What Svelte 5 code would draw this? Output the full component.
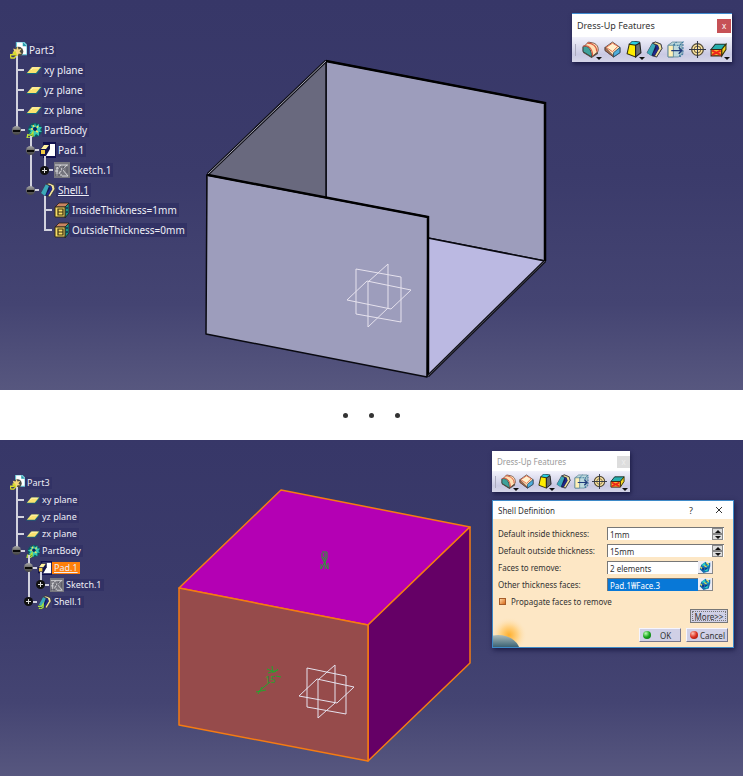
<script lang="ts">
	type TreeNode = {
		label: string;
		icon: string;
		toggle?: "plus" | "minus";
		state?: "active" | "selected";
		children?: TreeNode[];
	};

	const planes: TreeNode[] = [
		{ label: "xy plane", icon: "plane" },
		{ label: "yz plane", icon: "plane" },
		{ label: "zx plane", icon: "plane" }
	];

	const sketch: TreeNode = { label: "Sketch.1", icon: "sketch", toggle: "plus" };

	const resultTree: TreeNode[] = [
		...planes,
		{
			label: "PartBody",
			icon: "body",
			toggle: "minus",
			children: [
				{ label: "Pad.1", icon: "pad", toggle: "minus", children: [sketch] },
				{
					label: "Shell.1",
					icon: "shell",
					toggle: "minus",
					state: "active",
					children: [
						{ label: "InsideThickness=1mm", icon: "param" },
						{ label: "OutsideThickness=0mm", icon: "param" }
					]
				}
			]
		}
	];

	const editTree: TreeNode[] = [
		...planes,
		{
			label: "PartBody",
			icon: "body",
			toggle: "minus",
			children: [
				{ label: "Pad.1", icon: "pad", toggle: "minus", state: "selected", children: [sketch] },
				{ label: "Shell.1", icon: "shellEdit", toggle: "plus" }
			]
		}
	];

	const tools = [
		{ name: "Edge Fillet", icon: "fillet", more: true },
		{ name: "Chamfer", icon: "chamfer", more: false },
		{ name: "Draft Angle", icon: "draft", more: true },
		{ name: "Shell", icon: "shell", more: false },
		{ name: "Thickness", icon: "thickness", more: false },
		{ name: "Thread/Tap", icon: "thread", more: false },
		{ name: "Remove Face", icon: "remove", more: true }
	];

	let inside = $state("1mm");
	let outside = $state("15mm");
	let faces = $state("2 elements");
	let otherFaces = $state("Pad.1₩Face.3");
	let propagate = $state(true);

	function step(value: string, delta: number) {
		return Math.max(0, parseInt(value) + delta) + "mm";
	}
</script>

{#snippet icon(name: string)}
	<svg class="icon" viewBox="0 0 16 16" aria-hidden="true">
		{#if name === "part"}
			<path d="M6 0h7l3 3v9H6z" fill="#fff" stroke="#5fc6d8" stroke-width="1" />
			<path d="M12 0l4 4h-4z" fill="#279cab" />
			<circle cx="8" cy="9" r="4.5" fill="#4d4a44" />
			<path d="M3 6l3 1 1-3 1 3 3-1-2 3 2 2-3 0-1 3-2-3-3 0 2-2z" fill="#f5d77a" />
			<path d="M0 12h4l1-2 1 3-2 2H1zM3 9l2 3" fill="none" stroke="#d8dc2d" stroke-width="1.4" />
		{:else if name === "plane"}
			<path d="M0 12L6 5h10l-5 7z" fill="#176a7b" />
			<path d="M1 11L6 5h9l-5 6z" fill="#fbe36f" />
			<path d="M5 8l2-2h6" fill="none" stroke="#fff3ba" />
		{:else if name === "body"}
			<circle cx="9" cy="8" r="7" fill="#0b5960" />
			<path d="M9 1l1 3 3-2v3l3 0-2 3 2 2-3 0 0 4-3-2-2 3-1-4-4 1 2-3-3-2 4-1-1-3 3 1z" fill="#35c8b4" />
			<circle cx="9" cy="7" r="2" fill="#0b2260" />
			<path d="M7 3l1 2M12 4l-1 2M5 7h2M12 10l-2-1" stroke="#f4e15c" stroke-width="1.4" />
			<path d="M1 13h4l2-3v4l-3 2H1l1-4" fill="none" stroke="#b8e336" stroke-width="1.3" />
		{:else if name === "pad"}
			<path d="M3 0h13v16H3z" fill="#10104e" />
			<path d="M5 2h10v12H5z" fill="#fff" />
			<path d="M0 8l4-6h6v5l-4 7H0z" fill="#111148" />
			<path d="M1 7l3-4h5L6 7z" fill="#fff2a0" />
			<path d="M1 8h4v4H1z" fill="#efc943" />
		{:else if name === "sketch"}
			<path d="M0 0h16v16H0z" fill="#77777f" />
			<path d="M1 3h13M2 6h4M1 9h3M3 14V6l4-3M7 14c0-7 3-8 6-11M8 7l6 7H8M5 12l3-6" fill="none" stroke="#d7d7da" />
			<path d="M4 4l3 5M10 4l-3 8M13 5v6M1 13h5" fill="none" stroke="#4e4e5a" stroke-width=".8" />
		{:else if name === "param"}
			<path d="M1 5l4-4h10l-4 4z" fill="#c98562" stroke="#27201b" stroke-width=".8" />
			<path d="M11 5l4-4v10l-4 5z" fill="#16938b" stroke="#27201b" stroke-width=".8" />
			<path d="M1 5h10v10H1z" fill="#f6dc67" stroke="#302a1a" stroke-width="1" />
			<path d="M4 7h5v6H4zM4 10h5" fill="none" stroke="#3a3111" stroke-width="1.2" />
			<path d="M13 5v2M13 9v2" stroke="#102950" stroke-width="1.4" />
		{:else if name === "shell" || name === "shellEdit"}
			<path d="M1 11L6 2l3-1 5 2 1 4-5 8-4-1z" fill="#171b50" stroke="#3d4050" stroke-width=".7" />
			<path d="M1 11L6 2l3 2-4 10z" fill="#3ba9b8" />
			<path d="M6 2l3-1 5 2 1 4-5 8-2-1 4-7-1-3z" fill="#f2e39a" stroke="#34343e" stroke-width=".8" />
			<path d="M10 4l1 3-4 6" fill="none" stroke="#20298f" stroke-width="2" />
			{#if name === "shellEdit"}
				<path d="M0 13h4l2-3v4l-3 2-2-1" fill="none" stroke="#a7e53a" stroke-width="1.3" />
			{/if}
		{:else if name === "fillet"}
			<path d="M1 6l5-5 5 1c3 1 5 4 4 8l-6 5-8-5z" fill="#ffe0b4" stroke="#6a4436" stroke-width=".8" />
			<path d="M1 5c5-1 8 3 8 10l-8-5z" fill="#40a29b" stroke="#293d3e" stroke-width=".8" />
			<path d="M1 5c5-2 9 2 9 9M5 2c5 0 9 3 9 8" fill="none" stroke="#d8553e" />
			<path d="M9 15l6-5v2l-6 4-8-5v-1z" fill="#554b3d" />
		{:else if name === "chamfer"}
			<path d="M1 6l7-5 7 5v5l-6 4-8-6z" fill="#ffe5b7" stroke="#493d37" stroke-width=".8" />
			<path d="M1 6l8 8v1l-8-6z" fill="#a96f50" stroke="#523733" stroke-width=".7" />
			<path d="M9 11l6-5v5l-6 4z" fill="#4eaddd" stroke="#244863" stroke-width=".8" />
			<path d="M2 6l6-4 5 3-5 5z" fill="#fff0ce" stroke="#e2684b" stroke-width=".9" />
		{:else if name === "draft"}
			<path d="M4 3l3-3 7 1-4 4z" fill="#29cde1" stroke="#17323a" stroke-width=".8" />
			<path d="M4 3l6 1v11l-8-3z" fill="#ffed00" stroke="#342f10" />
			<path d="M10 4l4-2 1 9-5 4z" fill="#686c72" stroke="#222" />
		{:else if name === "thickness"}
			<path d="M1 4l4-3h9v11l-3 3H1z" fill="#bdd9dd" stroke="#62899a" stroke-width=".8" />
			<path d="M1 4h5v11H1z" fill="#fff0b5" stroke="#578397" stroke-width=".8" />
			<path d="M6 4l3-3M6 4h6v11M12 4l3-3v11l-3 3" fill="none" stroke="#37769b" stroke-dasharray="2 1" />
			<path d="M4 9h10M11 6l3 3-3 3" fill="none" stroke="#203a7c" stroke-width="1.2" />
		{:else if name === "thread"}
			<circle cx="8" cy="8" r="5.5" fill="#ffe8a4" stroke="#544b38" stroke-width="1.2" />
			<circle cx="8" cy="8" r="3" fill="none" stroke="#7d6c42" />
			<path d="M8 0v16M0 8h16" stroke="#313747" stroke-width="1" />
		{:else if name === "remove"}
			<path d="M1 8l4-5h10l-4 5z" fill="#27afae" stroke="#17342e" />
			<path d="M11 8l4-5v5l-4 6z" fill="#f3d822" stroke="#36350b" />
			<path d="M1 8h10v6H1z" fill="#ffb52b" stroke="#3f2511" />
			<path d="M2 9l8 4M10 9l-8 4" stroke="#ed241b" stroke-width="1.8" />
		{:else if name === "faces"}
			<path d="M3 5l6-4 2 3 4-2v5l-2 7-7 2-5-5z" fill="#156eb0" />
			<path d="M4 5l3-3 2 3-4 2zM9 7l4-3v3zM7 13l5-3-1 4z" fill="#2ad0c2" />
			<path d="M4 9l3 1-2 3zM9 9l2 1-3 2z" fill="#151e78" />
			<path d="M7 6l3 2M10 2l3 3M2 8l2 2" stroke="#efe351" stroke-width="1.5" />
		{/if}
	</svg>
{/snippet}

{#snippet branch(nodes: TreeNode[])}
	<ul>
		{#each nodes as node}
			<li>
				<div class="row">
					{#if node.toggle}
						<button class="toggle {node.toggle}" aria-label="Toggle {node.label}"></button>
					{/if}
					<span class="stub" class:short={node.toggle}></span>
					{@render icon(node.icon)}
					<span class="label {node.state ?? ''}">{node.label}</span>
				</div>
				{#if node.children}
					{@render branch(node.children)}
				{/if}
			</li>
		{/each}
	</ul>
{/snippet}

{#snippet tree(nodes: TreeNode[])}
	<div class="row root">
		{@render icon("part")}
		<span class="label">Part3</span>
	</div>
	{@render branch(nodes)}
{/snippet}

{#snippet toolbar()}
	<header class="toolbar-title">
		<h2>Dress-Up Features</h2>
		<button class="toolbar-close" aria-label="Close toolbar">x</button>
	</header>
	<div class="tools">
		{#each tools as tool}
			<button class="tool" class:more={tool.more} aria-label={tool.name}>
				{@render icon(tool.icon)}
			</button>
		{/each}
	</div>
{/snippet}

<main>
	<section class="scene">
		<svg class="model" viewBox="0 0 743 390" role="img" aria-label="Shelled part">
			<g stroke="#090910" stroke-width="1.5" stroke-linejoin="round">
				<path d="M326 61L545 103V261L428 238L326 220z" fill="#9d9dbc" />
				<path d="M207 175L326 61V220L207 200z" fill="#69697e" />
				<path d="M428 238L545 261L428 376z" fill="#bbb9e2" />
				<path d="M207 175L428 217L427 377L206 334z" fill="#9d9dbc" />
			</g>
			<path d="M208 174L326 61" stroke="#111118" stroke-width="3" />
			<path d="M208 174L326 61" stroke="#a6a6b7" stroke-width="1" />
			<path d="M326 61L545 103V261M208 175L428 217V376" fill="none" stroke="#000" stroke-width="2.5" />
			<path d="M428 376L545 261" stroke="#111118" stroke-width="3" />
			<path d="M428 376L545 261" stroke="#555568" stroke-width=".8" />
			<g class="axes">
				<path d="M356 269L401 277V322L356 314z" />
				<path d="M347 300L367 281L411 290L391 309z" />
				<path d="M388 264V308L368 327V282z" />
			</g>
		</svg>

		<nav class="tree" aria-label="Result specification tree">
			{@render tree(resultTree)}
		</nav>

		<div class="toolbar">
			{@render toolbar()}
		</div>
	</section>

	<div class="divider" aria-hidden="true">
		<span></span><span></span><span></span>
	</div>

	<section class="scene">
		<svg class="model" viewBox="0 0 743 336" role="img" aria-label="Pad with selected faces">
			<g stroke="#f57b13" stroke-width="1.5" stroke-linejoin="round">
				<path d="M281 50L470 87L368 185L179 148z" fill="#b400b4" />
				<path d="M368 185L470 87V223L368 321z" fill="#650066" />
				<path d="M179 148L368 185V321L179 285z" fill="#964b4b" />
			</g>
			<g class="axes">
				<path d="M307 228L346 236V274L307 267z" />
				<path d="M299 256L317 239L354 247L337 263z" />
				<path d="M335 225V263L318 278V240z" />
			</g>
			<g fill="none" stroke="#23a62c" stroke-width="1">
				<path d="M322 112h5M322 113v5l6 11M327 112v6l-6 11M323 117l3 4M325 113v16M328 123v6M321 124v5" />
				<path d="M267 229l8 3 3-3M268 233l10-3M272 226l1 7M258 252l12-10M258 254l4-7M256 252l10-2M276 236l5 1" />
			</g>
			<text class="dimension" x="265" y="243">15</text>
		</svg>

		<nav class="tree compact" aria-label="Edit specification tree">
			{@render tree(editTree)}
		</nav>

		<div class="toolbar compact">
			{@render toolbar()}
		</div>

		<form class="dialog" onsubmit={(e) => e.preventDefault()}>
			<header>
				<h2>Shell Definition</h2>
				<button type="button" class="caption" aria-label="Help">?</button>
				<button type="button" class="caption" aria-label="Close">
					<svg viewBox="0 0 8 8"><path d="M1 1l6 6M7 1L1 7" /></svg>
				</button>
			</header>
			<div class="body">
				<svg class="planet" viewBox="0 0 36 32" aria-hidden="true">
					<defs>
						<radialGradient id="glow">
							<stop offset="0" stop-color="#ffb02e" />
							<stop offset=".5" stop-color="#ffd48a" />
							<stop offset="1" stop-color="#fde7c5" stop-opacity="0" />
						</radialGradient>
						<linearGradient id="globe" x1="0" y1="0" x2="0" y2="1">
							<stop offset="0" stop-color="#adbcbb" />
							<stop offset=".3" stop-color="#4c7180" />
							<stop offset=".5" stop-color="#18384e" />
						</linearGradient>
					</defs>
					<circle cx="16" cy="20" r="18" fill="url(#glow)" />
					<ellipse cx="5" cy="37" rx="22" ry="17" fill="url(#globe)" />
				</svg>

				<div class="field">
					<label for="inside">Default inside thickness:</label>
					<div class="spin">
						<input id="inside" type="text" bind:value={inside} />
						<div class="arrows">
							<button type="button" aria-label="Increase inside thickness" onclick={() => (inside = step(inside, 1))}></button>
							<button type="button" class="down" aria-label="Decrease inside thickness" onclick={() => (inside = step(inside, -1))}></button>
						</div>
					</div>
				</div>
				<div class="field">
					<label for="outside">Default outside thickness:</label>
					<div class="spin">
						<input id="outside" type="text" bind:value={outside} />
						<div class="arrows">
							<button type="button" aria-label="Increase outside thickness" onclick={() => (outside = step(outside, 1))}></button>
							<button type="button" class="down" aria-label="Decrease outside thickness" onclick={() => (outside = step(outside, -1))}></button>
						</div>
					</div>
				</div>
				<div class="field">
					<label for="faces">Faces to remove:</label>
					<div class="picker">
						<input id="faces" type="text" bind:value={faces} />
						<button type="button" aria-label="Edit faces to remove">{@render icon("faces")}</button>
					</div>
				</div>
				<div class="field">
					<label for="other">Other thickness faces:</label>
					<div class="picker">
						<input id="other" class="highlight" type="text" bind:value={otherFaces} />
						<button type="button" aria-label="Edit other thickness faces">{@render icon("faces")}</button>
					</div>
				</div>
				<label class="check">
					<input type="checkbox" bind:checked={propagate} />
					Propagate faces to remove
				</label>
				<div class="actions">
					<button type="button" class="push focus">More&gt;&gt;</button>
				</div>
				<div class="actions last">
					<button type="submit" class="push"><i class="lamp green"></i><span>OK</span></button>
					<button type="button" class="push"><i class="lamp red"></i><span>Cancel</span></button>
				</div>
			</div>
		</form>
	</section>
</main>

<style>
	:global(body) {
		margin: 0;
		background: #fff;
	}

	main {
		font-family: "Noto Sans", "Open Sans", sans-serif;
	}

	button,
	input {
		margin: 0;
		padding: 0;
		border: 0;
		box-sizing: border-box;
		font: inherit;
		color: inherit;
	}

	h2 {
		margin: 0;
		font-size: inherit;
		font-weight: normal;
	}

	.scene {
		position: relative;
		background: linear-gradient(#373768, #3b3b6b 45%, #444472 78%, #57577f);
	}

	.model {
		display: block;
		width: 100%;
	}

	.axes {
		fill: none;
		stroke: #e6e2ee;
		stroke-width: 1;
	}

	.dimension {
		fill: #23a62c;
		font-size: 9px;
	}

	.icon {
		display: block;
		flex: none;
		width: 17px;
		height: 17px;
	}

	/* Specification tree */
	.tree {
		--row: 20px;
		--indent: 14px;
		--glyph: 16px;
		position: absolute;
		top: 40px;
		left: 10px;
		color: #eeeef6;
		font-size: 10px;
		white-space: nowrap;
	}

	.tree.compact {
		--row: 17px;
		--indent: 12px;
		--glyph: 14px;
		top: 34px;
		font-size: 9px;
	}

	.tree .icon {
		width: var(--glyph);
		height: var(--glyph);
		position: relative;
	}

	.tree ul {
		margin: 0;
		padding: 0 0 0 6px;
		list-style: none;
	}

	.tree ul ul {
		padding-left: var(--indent);
	}

	.tree li {
		position: relative;
	}

	.tree li::before {
		content: "";
		position: absolute;
		top: -4px;
		bottom: 0;
		left: 0;
		width: 2px;
		background: #d2d2de;
	}

	.tree li:last-child::before {
		bottom: auto;
		height: calc(var(--row) / 2 + 4px);
	}

	.row {
		display: flex;
		align-items: center;
		height: var(--row);
	}

	.root .icon {
		width: calc(var(--glyph) + 1px);
		height: calc(var(--glyph) + 1px);
	}

	.stub {
		width: 8px;
		height: 2px;
		margin-right: 2px;
		background: #d2d2de;
	}

	.stub.short {
		width: 4px;
		margin-right: 1px;
	}

	.toggle {
		position: relative;
		width: 9px;
		height: 9px;
		margin-left: -4px;
		border-radius: 50%;
		background: linear-gradient(#aaa, #666 50%, #444);
	}

	.toggle.plus {
		background: #111;
	}

	.toggle::before,
	.toggle.plus::after {
		content: "";
		position: absolute;
		top: 4px;
		left: 1px;
		width: 7px;
		height: 2px;
		background: #0a0a0a;
	}

	.toggle.plus::before {
		left: 2px;
		width: 5px;
		height: 1px;
		background: #ddd;
	}

	.toggle.plus::after {
		top: 2px;
		left: 4px;
		width: 1px;
		height: 5px;
		background: #ddd;
	}

	.label {
		padding: 0 2px;
		line-height: 14px;
		background: #323265;
	}

	.compact .label {
		line-height: 12px;
	}

	.label.active {
		text-decoration: underline;
	}

	.label.selected {
		background: #ff800b;
		text-decoration: underline;
	}

	/* Dress-Up toolbar */
	.toolbar {
		position: absolute;
		top: 13px;
		right: 11px;
		width: 160px;
		border-top: 1px solid #3f8bd0;
		background: #fff;
		color: #333;
		font-size: 9px;
		box-shadow: 1px 2px 4px #1b1b45;
	}

	.toolbar-title {
		display: flex;
		align-items: center;
		justify-content: space-between;
		height: 23px;
		padding: 0 1px 0 5px;
	}

	.toolbar-close {
		width: 14px;
		height: 14px;
		background: #c65156;
		color: #fff;
		font-size: 8px;
		line-height: 12px;
	}

	.tools {
		display: flex;
		align-items: center;
		justify-content: space-between;
		height: 25px;
		padding: 0 5px 0 3px;
		background: linear-gradient(#f2f2fb, #c9c9e3 70%, #d6d6e8);
	}

	.tools::before {
		content: "";
		width: 1px;
		height: 12px;
		margin-right: 2px;
		background: #aaaabd;
	}

	.tool {
		position: relative;
		background: none;
	}

	.tool.more::after {
		content: "";
		position: absolute;
		right: -3px;
		bottom: -2px;
		border: 3px solid transparent;
		border-top: 3px solid #111;
		border-bottom: 0;
	}

	.toolbar.compact {
		top: 11px;
		right: 113px;
		width: 138px;
		border-top-color: #fff;
		color: #999;
		font-size: 8px;
	}

	.compact .toolbar-title {
		height: 19px;
		padding-right: 0;
	}

	.compact .toolbar-close {
		width: 13px;
		height: 12px;
		background: #ddd;
		color: #eee;
	}

	.compact .tools {
		height: 21px;
	}

	.compact .tools .icon {
		width: 15px;
		height: 15px;
	}

	/* Separator between the two views */
	.divider {
		display: flex;
		align-items: center;
		justify-content: center;
		gap: 21px;
		height: 50px;
	}

	.divider span {
		width: 5px;
		height: 5px;
		border-radius: 50%;
		background: #333;
	}

	/* Shell Definition dialog */
	.dialog {
		position: absolute;
		top: 60px;
		right: 9px;
		width: 240px;
		border: 1px solid #3e8ac8;
		background: #fde7c5;
		color: #333;
		font-size: 8px;
		box-shadow: 1px 2px 5px #1b1b45;
	}

	.dialog header {
		display: flex;
		align-items: center;
		height: 18px;
		padding-left: 5px;
		background: #fff;
	}

	.dialog h2 {
		flex: 1;
	}

	.caption {
		width: 28px;
		background: none;
		font-size: 9px;
	}

	.caption svg {
		width: 8px;
		height: 8px;
		fill: none;
		stroke: #333;
		stroke-width: 1;
	}

	.body {
		position: relative;
		padding: 6px 5px 5px;
	}

	.planet {
		position: absolute;
		bottom: 0;
		left: 0;
		width: 36px;
		height: 32px;
	}

	.field {
		display: grid;
		grid-template-columns: 109px minmax(0, 1fr);
		align-items: center;
		height: 17px;
	}

	.spin,
	.picker {
		display: flex;
		height: 13px;
		margin-right: 4px;
	}

	.picker {
		margin-right: 15px;
	}

	.field input {
		flex: 1;
		width: 0;
		min-width: 0;
		padding: 0 2px;
		border-top: 1px solid #777;
		border-left: 1px solid #777;
		background: #fff;
	}

	.field input.highlight {
		background: #0878d7;
		color: #fff;
	}

	.arrows {
		display: flex;
		flex-direction: column;
		width: 12px;
		border-top: 1px solid #777;
		background: #fff;
	}

	.arrows button {
		display: flex;
		flex: 1;
		align-items: center;
		justify-content: center;
		width: 11px;
		border: 1px solid #888;
		background: #ddd;
	}

	.arrows button::before {
		content: "";
		border: 3px solid transparent;
		border-top: 0;
		border-bottom: 3px solid #111;
	}

	.arrows .down::before {
		border-top: 3px solid #111;
		border-bottom: 0;
	}

	.picker button {
		display: flex;
		align-items: center;
		justify-content: center;
		width: 15px;
		border-right: 1px solid #888;
		border-bottom: 1px solid #888;
		background: #ececf4;
	}

	.picker .icon {
		width: 12px;
		height: 12px;
	}

	.check {
		display: flex;
		align-items: center;
		gap: 4px;
		height: 16px;
	}

	.check input {
		width: 7px;
		height: 7px;
		margin: 0 1px;
		appearance: none;
		border: 1px solid #a65c29;
		background: #fff;
	}

	.check input:checked {
		background: linear-gradient(135deg, #ffd5a2, #d76b1c);
	}

	.actions {
		position: relative;
		display: flex;
		justify-content: flex-end;
		gap: 5px;
		margin-bottom: 5px;
	}

	.actions.last {
		margin-bottom: 0;
	}

	.push {
		display: flex;
		align-items: center;
		justify-content: center;
		width: 42px;
		height: 14px;
		border: 1px solid;
		border-color: #f5f5ff #77778c #77778c #f5f5ff;
		background: #d0d0e6;
	}

	.push span {
		flex: 1;
	}

	.push.focus {
		width: 38px;
		border-color: #777;
		outline: 1px dotted #777;
		outline-offset: -3px;
	}

	.lamp {
		width: 8px;
		height: 8px;
		margin-left: 3px;
		border-radius: 50%;
	}

	.lamp.green {
		background: radial-gradient(circle at 35% 30%, #b9ffb0, #18a51c 50%, #08640d);
	}

	.lamp.red {
		background: radial-gradient(circle at 35% 30%, #ffc2b3, #db3020 50%, #8c1009);
	}
</style>
